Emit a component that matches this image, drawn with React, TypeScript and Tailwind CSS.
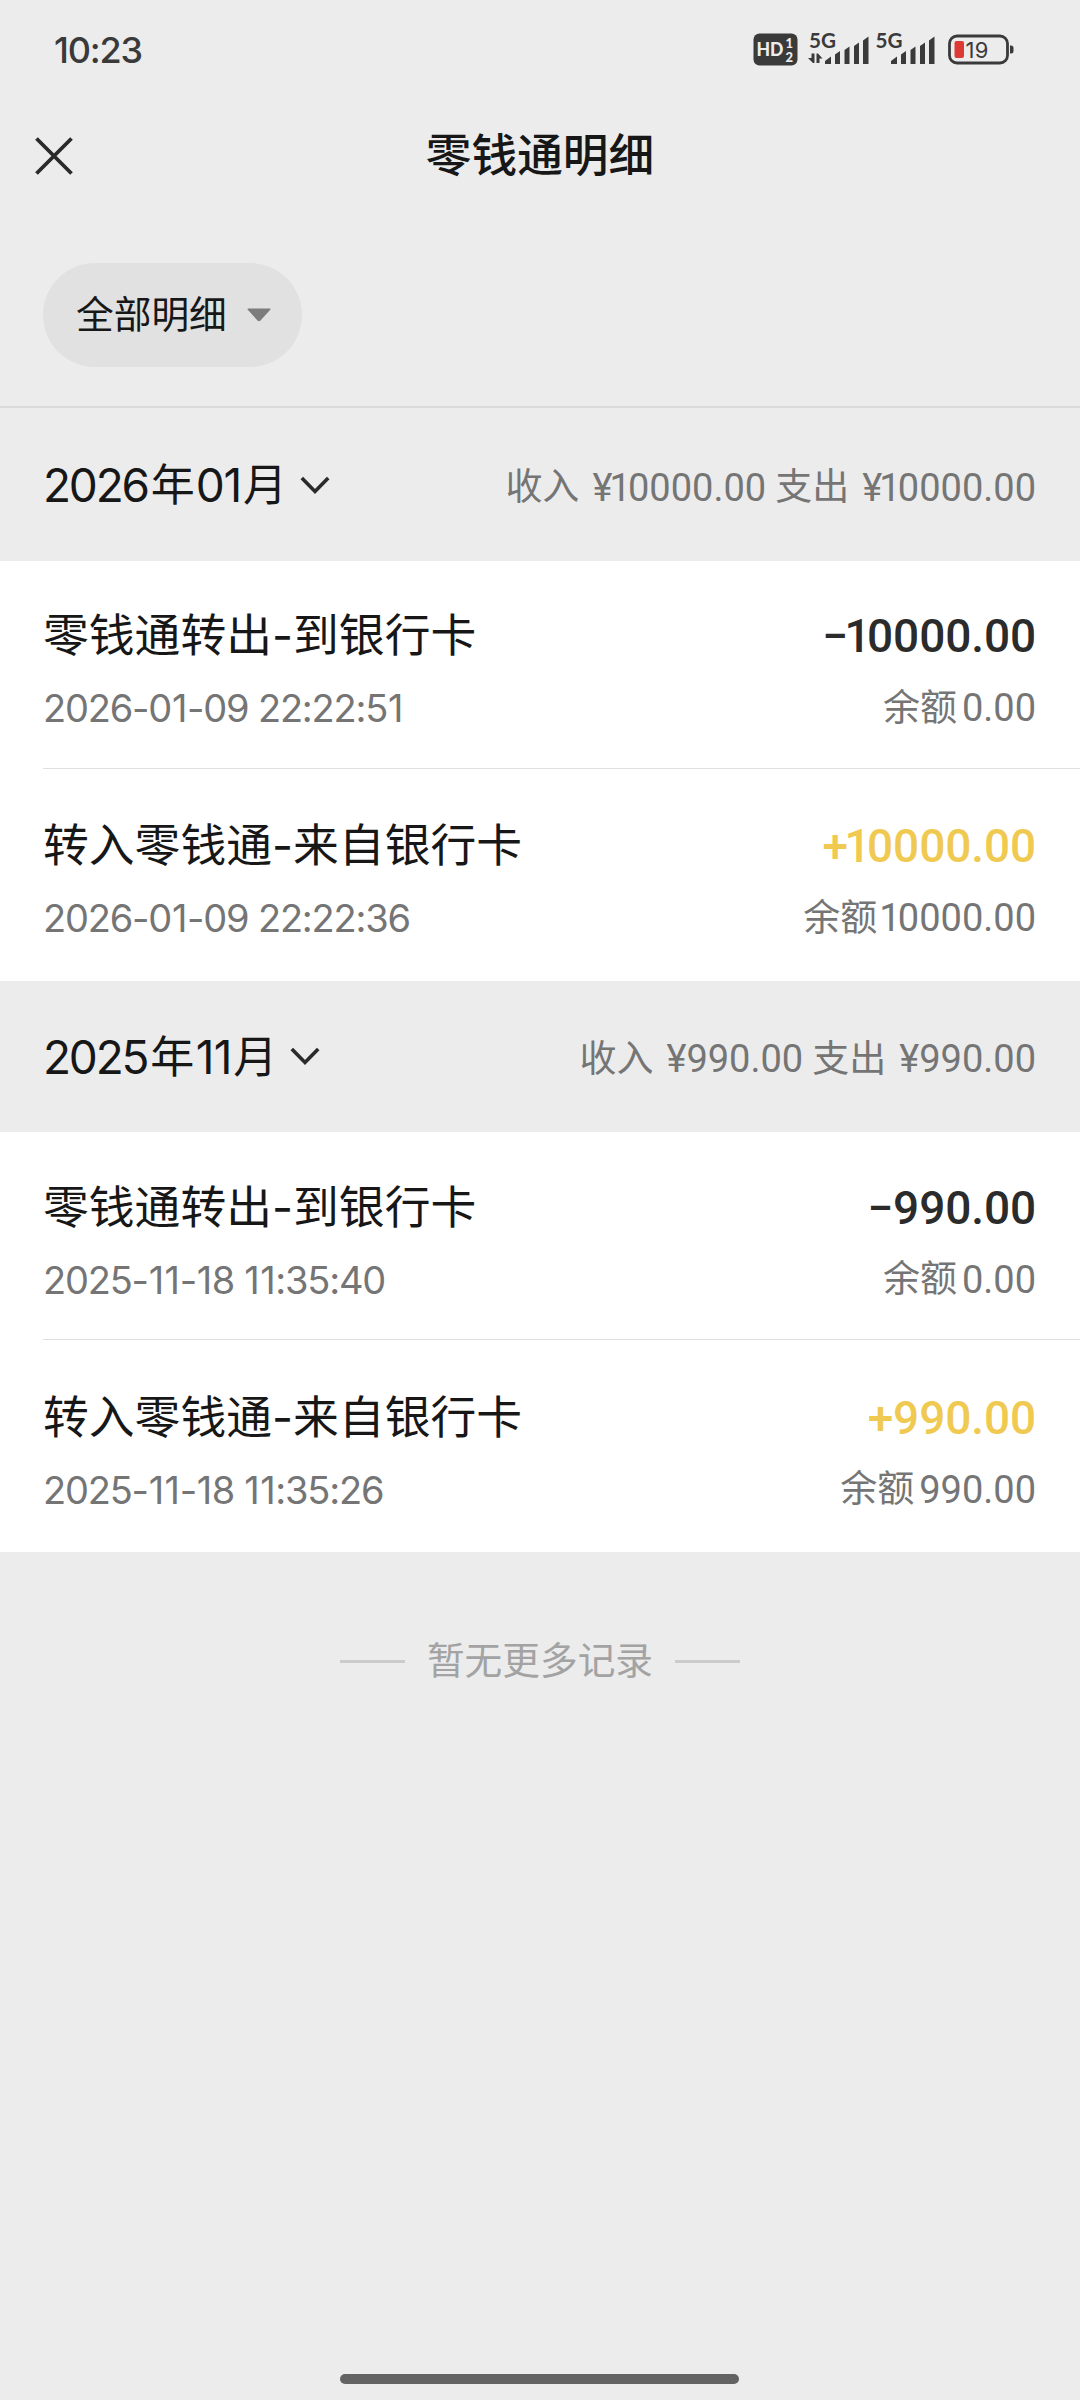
import { clsx } from "clsx";

interface Entry {
  title: string;
  time: string;
  amount: string;
  balance: string;
  income?: boolean;
}

interface Month {
  year: string;
  month: string;
  income: string;
  expense: string;
  entries: Entry[];
}

const MONTHS: Month[] = [
  {
    year: "2026",
    month: "01",
    income: "¥10000.00",
    expense: "¥10000.00",
    entries: [
      {
        title: "零钱通转出-到银行卡",
        time: "2026-01-09 22:22:51",
        amount: "−10000.00",
        balance: "0.00",
      },
      {
        title: "转入零钱通-来自银行卡",
        time: "2026-01-09 22:22:36",
        amount: "+10000.00",
        balance: "10000.00",
        income: true,
      },
    ],
  },
  {
    year: "2025",
    month: "11",
    income: "¥990.00",
    expense: "¥990.00",
    entries: [
      {
        title: "零钱通转出-到银行卡",
        time: "2025-11-18 11:35:40",
        amount: "−990.00",
        balance: "0.00",
      },
      {
        title: "转入零钱通-来自银行卡",
        time: "2025-11-18 11:35:26",
        amount: "+990.00",
        balance: "990.00",
        income: true,
      },
    ],
  },
];

const SignalBars = ({ x }: { x: number }) => (
  <g transform={`translate(${x} 0)`} fill="#3a3a3a">
    <path d="M0.5 34V31L6.5 26.5V34z" />
    <path d="M10.5 34V24.5L15.5 21V34z" />
    <path d="M20 34V20L25 16.5V34z" />
    <path d="M29.5 34V16L34.5 12.5V34z" />
    <path d="M38.5 34V10.5L44 6.5V34z" />
  </g>
);

const StatusIcons = () => (
  <svg width="264" height="52" viewBox="0 -6 264 52" className="mt-[2px] font-['Lato',sans-serif]">
    <rect x="0.5" y="3.5" width="44" height="32" rx="6" fill="#3a3a3a" />
    <text x="3.5" y="26" fontSize="19" fontWeight="900" fill="#ececec" textLength="27" lengthAdjust="spacingAndGlyphs">
      HD
    </text>
    <text x="32.5" y="17.5" fontSize="13" fontWeight="900" fill="#ececec">
      1
    </text>
    <text x="32.5" y="31.5" fontSize="13" fontWeight="900" fill="#ececec">
      2
    </text>

    <text x="56" y="18" fontSize="20" fontWeight="700" fill="#3a3a3a" textLength="27" lengthAdjust="spacingAndGlyphs">
      5G
    </text>
    <path d="M55 28H58.5V23.5H61.5V33H60zM63.5 33V23.5H65L69.5 28.5H66.5V33z" fill="#3a3a3a" />
    <SignalBars x={71.5} />

    <text x="122.5" y="18" fontSize="20" fontWeight="700" fill="#3a3a3a" textLength="27" lengthAdjust="spacingAndGlyphs">
      5G
    </text>
    <SignalBars x={137.5} />

    <rect x="196.5" y="6" width="58" height="27" rx="7.5" fill="none" stroke="#3a3a3a" strokeWidth="2.8" />
    <rect x="201.5" y="11" width="9.5" height="17" rx="2" fill="#dc3a33" />
    <path d="M257 15.5h1a2.5 2.5 0 0 1 2.5 2.5v3a2.5 2.5 0 0 1-2.5 2.5h-1z" fill="#3a3a3a" />
    <text
      x="212.5"
      y="27.5"
      fontSize="22"
      fontWeight="400"
      fill="#3a3a3a"
      textLength="23"
      className="font-['Inter',sans-serif]"
    >
      19
    </text>
  </svg>
);

// adjusts the side bearings of "1", tight for amounts and a bit loose for dates
const Digits = ({ value, one = "-mx-[0.075em]" }: { value: string; one?: string }) => (
  <>
    {value.split(/(1)/).map((part, i) =>
      part === "1" ? (
        <span key={i} className={one}>
          1
        </span>
      ) : (
        part
      ),
    )}
  </>
);

const MonthHeader = ({ year, month, income, expense }: Month) => (
  <div className="flex h-[151.4px] items-center justify-between pr-[44px] pl-[43px]">
    <div className="flex items-center text-[46px] leading-none text-[#171717]">
      <span className="tracking-[-2.2px]">{year}</span>
      <span className="ml-[3px] text-[44px]">年</span>
      <span className="ml-[1px] tracking-[-1.8px] [font-kerning:none]">
        <Digits value={month} one="mx-[0.5px]" />
      </span>
      <span className="ml-[2px] text-[44px]">月</span>
      <svg width="30" height="19" viewBox="0 0 30 19" fill="none" className="ml-[13px]">
        <path d="M1.8 2L15 15.5L28.2 2" stroke="#2a2a2a" strokeWidth="3.6" />
      </svg>
    </div>
    <div className="mt-[5px] flex items-center font-['Roboto','Noto_Sans_CJK_SC',sans-serif] text-[38px] leading-none text-[#757575]">
      <span className="text-[37px]">收入</span>
      <span className="ml-[13px]">
        <Digits value={income} />
      </span>
      <span className="ml-[9px] text-[37px]">支出</span>
      <span className="ml-[13px]">
        <Digits value={expense} />
      </span>
    </div>
  </div>
);

const EntryRow = ({ entry, divider }: { entry: Entry; divider: boolean }) => (
  <div className="h-[210px] pl-[43px]">
    <div className="flex h-[207px] flex-col pt-[50.2px] pr-[44px]">
      <div className="flex h-[50px] items-center justify-between">
        <p className="text-[45.8px] leading-none text-[#171717]">{entry.title}</p>
        <p
          className={clsx(
            "font-['Roboto',sans-serif] text-[46px] leading-none font-medium tracking-[-0.1px]",
            entry.income ? "text-[#f0c951]" : "text-[#2b2b2b]",
          )}
        >
          <Digits value={entry.amount} />
        </p>
      </div>
      <div className="mt-[22px] flex h-[50px] items-center justify-between text-[#757575]">
        <p className="text-[38px] leading-none tracking-[-1.2px] [font-kerning:none]">
          <Digits value={entry.time} one="mx-[0.8px]" />
        </p>
        <p className="flex items-center font-['Roboto','Noto_Sans_CJK_SC',sans-serif] text-[38px] leading-none">
          <span className="text-[37px]">余额</span>
          <span className="ml-[5px]">
            <Digits value={entry.balance} />
          </span>
        </p>
      </div>
    </div>
    {divider && <div className="h-px bg-[#e0e0e0]" />}
  </div>
);

const App = () => {
  return (
    <main className="flex h-[2400px] w-[1080px] flex-col bg-[#ececec] font-['Inter','Noto_Sans_CJK_SC',sans-serif]">
      <header className="flex h-[98px] items-center justify-between pr-[63px] pl-[54px]">
        <span className="mt-px text-[36px] leading-none font-medium tracking-[-1.2px] text-[#3a3a3a]">10:23</span>
        <StatusIcons />
      </header>

      <nav className="grid h-[115px] grid-cols-[1fr_auto_1fr] items-center">
        <svg width="38" height="38" viewBox="0 0 38 38" className="ml-[35px]">
          <path d="M1.5 1.5L36.5 36.5M36.5 1.5L1.5 36.5" stroke="#2a2a2a" strokeWidth="3.8" />
        </svg>
        <h1 className="mt-px text-[45.7px] leading-none font-medium text-[#171717]">零钱通明细</h1>
      </nav>

      <div className="h-[195px] border-b-2 border-[#dadada] pt-[50px] pl-[43px]">
        <button className="flex h-[104px] w-[259px] items-center rounded-full bg-[#e1e1e1] pl-[33px] text-[37.7px] leading-none text-[#171717]">
          <span className="-mt-px">全部明细</span>
          <svg width="24" height="14" viewBox="0 0 24 14" className="ml-[20px]">
            <path d="M1 0.5H23Q24 1 23 2L13.5 12.5Q12 14 10.5 12.5L1 2Q0 1 1 0.5z" fill="#7c7c7c" />
          </svg>
        </button>
      </div>

      <div className="mt-[1.6px]">
        {MONTHS.map((item) => (
          <section key={item.year}>
            <MonthHeader {...item} />
            <div className="bg-white">
              {item.entries.map((entry, i) => (
                <EntryRow key={entry.time} entry={entry} divider={i < item.entries.length - 1} />
              ))}
            </div>
          </section>
        ))}
      </div>

      <div className="mt-[90px] flex items-center justify-center gap-[22px] text-[37.7px] leading-none text-[#a3a3a3]">
        <span className="h-[3px] w-[65px] bg-[#cbcbcb]" />
        暂无更多记录
        <span className="h-[3px] w-[65px] bg-[#cbcbcb]" />
      </div>

      <div className="mt-auto mb-[16px] ml-[340px] h-[10px] w-[399px] rounded-full bg-[#636363]" />
    </main>
  );
};

export default App;
